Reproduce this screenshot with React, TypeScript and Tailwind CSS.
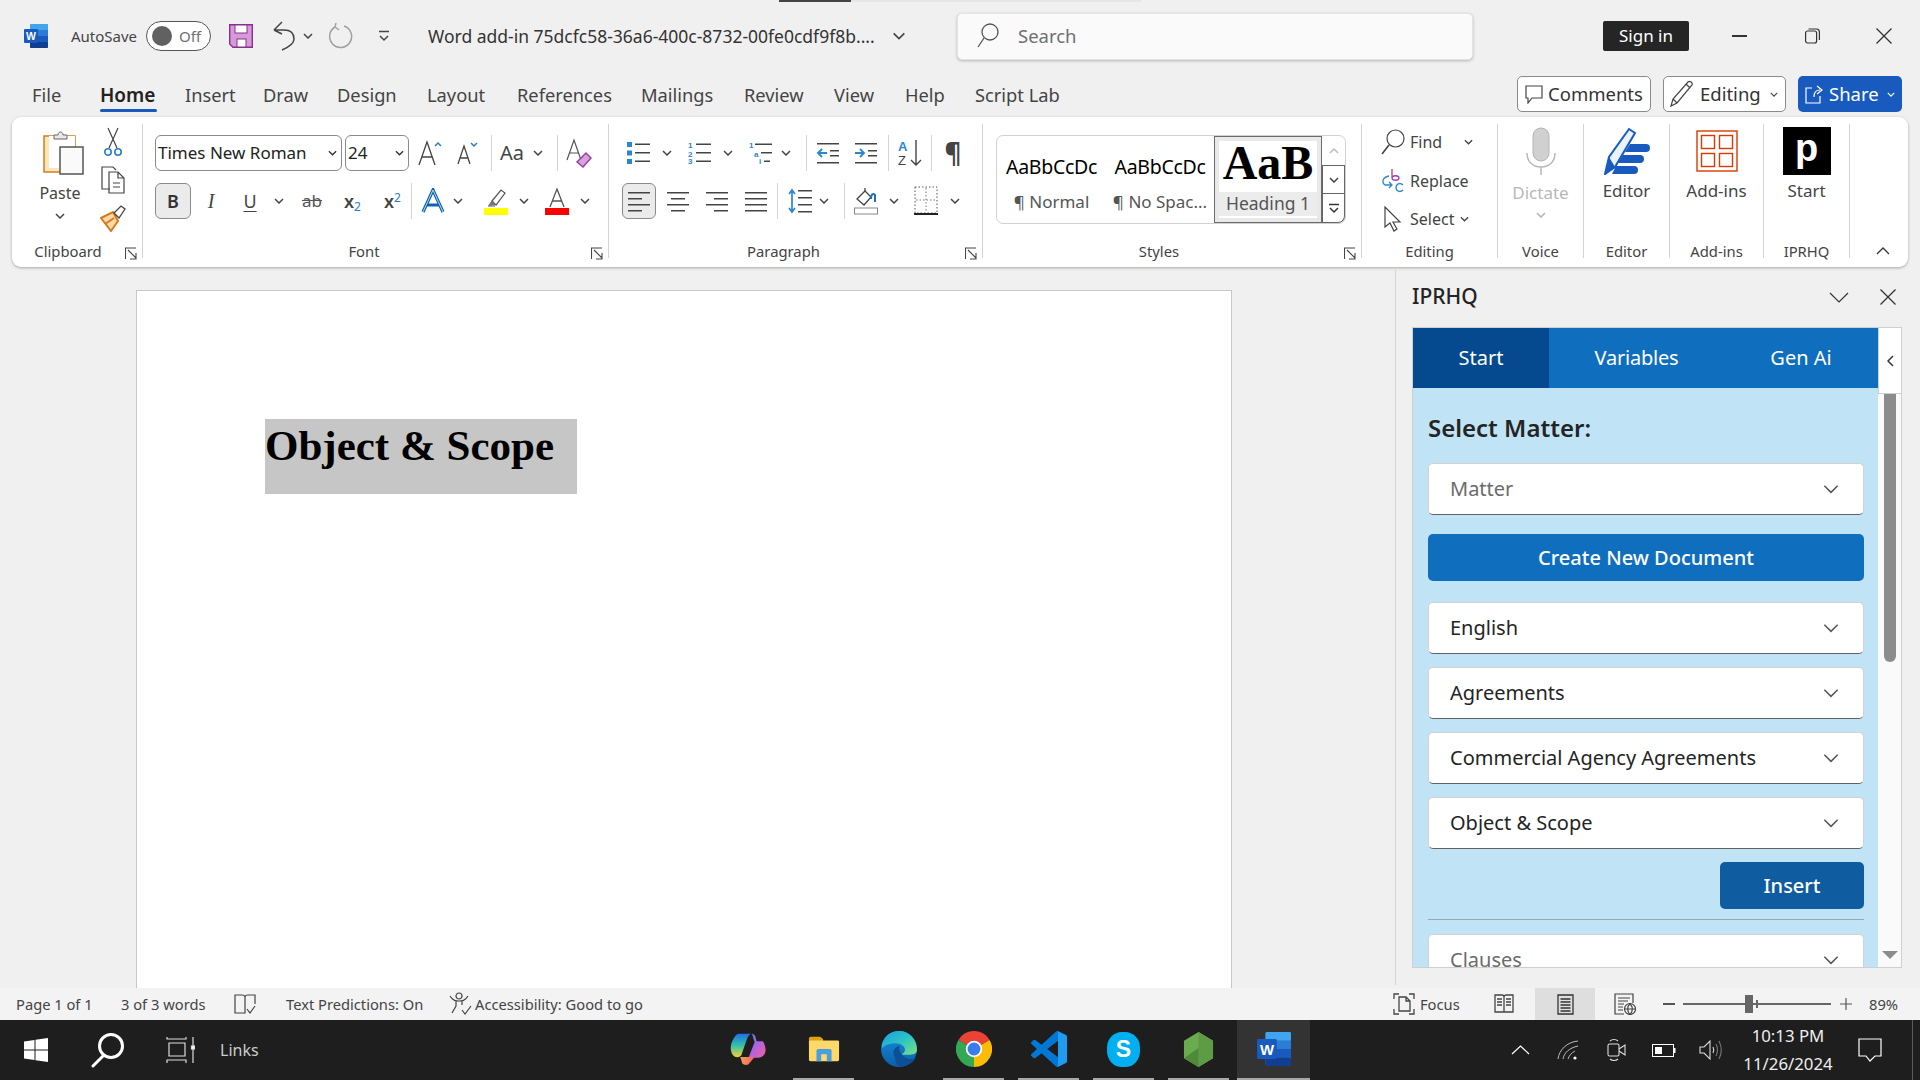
import React from "react";

const Chev = ({ c = "#444", w = 10, h = 6, sw = 1.5 }: { c?: string; w?: number; h?: number; sw?: number }) => (
  <svg width={w} height={h} viewBox="0 0 10 6" fill="none" className="shrink-0">
    <path d="M1 1 L5 5 L9 1" stroke={c} strokeWidth={sw} />
  </svg>
);

const WordIcon = ({ s = 24 }: { s?: number }) => (
  <svg width={s} height={s} viewBox="0 0 24 24">
    <rect x="6" y="0" width="18" height="24" rx="1.5" fill="#2b7cd3" />
    <rect x="6" y="0" width="18" height="6" rx="1" fill="#41a5ee" />
    <rect x="6" y="12" width="18" height="6" fill="#185abd" />
    <rect x="6" y="18" width="18" height="6" rx="1" fill="#103f91" />
    <rect x="0" y="5" width="14" height="14" rx="1" fill="#185abd" />
    <text x="7" y="16" textAnchor="middle" fontSize="10.5" fontWeight="700" fill="#fff" fontFamily="Liberation Sans">W</text>
  </svg>
);

const Sep = ({ h = 36 }: { h?: number }) => <div style={{ height: h }} className="w-[1px] bg-[#d4d4d4] shrink-0" />;

const Launcher = () => (
  <svg width="12" height="13" viewBox="0 0 12 13" fill="none" className="absolute right-[5px] bottom-[-2px]">
    <path d="M0.5 12V1H11M3 3l8 8M11 6v6H5" stroke="#444" strokeWidth="1.1" />
  </svg>
);

const Lines = ({ rows }: { rows: [number, number][] }) => (
  <svg width="24" height="24" viewBox="0 0 24 24">
    {rows.map((r, i) => (
      <rect key={i} x={r[0]} y={3 + i * 6} width={r[1]} height="1.5" fill="#444" />
    ))}
  </svg>
);

const Group = ({ w, label, pr, launcher, children }: { w: string; label?: string; pr?: string; launcher?: boolean; children: React.ReactNode }) => (
  <div className={`${w} relative h-[134px] border-r border-[#d4d4d4] flex flex-col shrink-0`}>
    <div className="flex-1 min-h-0">{children}</div>
    <div className={`${pr ?? ""} h-[20px] -mb-[3px] text-center text-[14.8px] leading-[20px] text-[#444]`}>{label}</div>
    {launcher && <Launcher />}
  </div>
);

const Dropdown = ({ text, muted }: { text: string; muted?: boolean }) => (
  <div className="h-[52px] w-[436px] shrink-0 bg-white rounded-[5px] border border-[#d1d1d1] border-b-[#616161] flex items-center pl-[21px] pr-[23px]">
    <span className={`text-[20px] ${muted ? "text-[#6b6b6b]" : "text-[#242424]"}`}>{text}</span>
    <span className="ml-auto"><Chev c="#555" w={18} h={10} sw={0.9} /></span>
  </div>
);

const Tab = ({ w, t }: { w: string; t: string }) => <div className={`${w} pt-[11px] h-[28px] leading-[28px] text-[#444] shrink-0 box-content`}>{t}</div>;

const AppSlot = ({ children, line, active }: { children: React.ReactNode; line?: string; active?: boolean }) => (
  <div className="w-[75px] h-[60px] flex flex-col items-center shrink-0">
    <div className={`${active ? "bg-[#333333]" : ""} w-[73px] flex-1 flex items-center justify-center`}>{children}</div>
    <div className={`${line ?? ""} h-[2px] bg-[#a8a8a8]`} />
  </div>
);

export default function App() {
  return (
    <div className="w-[1920px] h-[1080px] overflow-hidden flex flex-col bg-[#f0f0f0] font-['Noto_Sans',sans-serif] text-[#333]">
      {/* progress line */}
      <div className="h-[2px] flex shrink-0">
        <div className="ml-[779px] w-[72px] bg-[#444]" />
        <div className="w-[290px] bg-[#e6e6e6]" />
      </div>

      {/* title bar */}
      <div className="h-[68px] flex items-center shrink-0">
        <div className="ml-[24px] w-[24px]"><WordIcon /></div>
        <div className="ml-[23px] w-[66px] text-[15px] text-[#444] whitespace-nowrap">AutoSave</div>
        <div className="ml-[9px] w-[65px] h-[30px] rounded-full border border-[#555] bg-white flex items-center pl-[5px] shrink-0">
          <div className="w-[20px] h-[20px] rounded-full bg-[#616161]" />
          <span className="ml-[7px] text-[15px] text-[#707070]">Off</span>
        </div>
        <div className="ml-[18px] w-[24px]">
          <svg width="24" height="24" viewBox="0 0 24 24">
            <path d="M0.7 0.7H23.3V23.3H4L0.7 20Z" fill="#d79ad8" stroke="#8a2f8f" strokeWidth="1.4" />
            <rect x="6" y="1" width="12" height="8" fill="#fff" stroke="#8a2f8f" />
            <rect x="8" y="15" width="9" height="8" fill="#fff" stroke="#8a2f8f" />
          </svg>
        </div>
        <div className="ml-[20px] w-[22px]">
          <svg width="22" height="30" viewBox="0 0 22 30" fill="none" stroke="#444" strokeWidth="1.5">
            <path d="M1 9 L9 1M1 9 L9 13M1 9 H11 C18 9 21 13 21 18 C21 22 16 26 9 29" />
          </svg>
        </div>
        <div className="ml-[8px] w-[10px]"><Chev /></div>
        <div className="ml-[16px] w-[24px]">
          <svg width="24" height="26" viewBox="0 0 24 26" fill="none" stroke="#a0a0a0" strokeWidth="1.5">
            <path d="M15 3 A11 11 0 1 1 6 4M6 4 L7 0M6 4 L10 7" />
          </svg>
        </div>
        <div className="ml-[25px] w-[12px]">
          <svg width="12" height="12" viewBox="0 0 12 12" fill="none" stroke="#444" strokeWidth="1.5">
            <path d="M1 1.5H11M2 6L6 10L10 6" />
          </svg>
        </div>
        <div className="ml-[38px] w-[448px] text-[17.5px] text-[#333] whitespace-nowrap">Word add-in 75dcfc58-36a6-400c-8732-00fe0cdf9f8b....</div>
        <div className="ml-[16px] w-[14px]"><Chev w={14} h={8} c="#444" sw={1.2} /></div>
        <div className="ml-[51px] w-[516px] h-[47px] rounded-[5px] bg-[#fafafa] border border-[#e4e4e4] shadow-[0_1px_3px_rgba(0,0,0,0.25)] flex items-center pl-[19px] shrink-0">
          <svg width="22" height="28" viewBox="0 0 22 28" fill="none" stroke="#555" strokeWidth="1.3">
            <circle cx="13" cy="10" r="8" />
            <path d="M7 16 L1 25" />
          </svg>
          <span className="ml-[19px] text-[18.5px] text-[#707070]">Search</span>
        </div>
        <div className="ml-[130px] w-[86px] h-[30px] rounded-[2px] bg-[#252525] text-white text-[17px] flex items-center justify-center shrink-0">Sign in</div>
        <div className="ml-[43px] w-[15px] h-[1.5px] bg-[#333]" />
        <div className="ml-[58px] w-[15px]">
          <svg width="15" height="16" viewBox="0 0 15 16" fill="none" stroke="#333" strokeWidth="1.2">
            <rect x="0.6" y="3" width="11" height="12" rx="2" />
            <path d="M3.5 1H11.5A3 3 0 0 1 14.4 4V12" />
          </svg>
        </div>
        <div className="ml-[56px] w-[16px]">
          <svg width="16" height="16" viewBox="0 0 16 16" stroke="#333" strokeWidth="1.3"><path d="M0.5 0.5L15.5 15.5M15.5 0.5L0.5 15.5" /></svg>
        </div>
      </div>

      {/* tabs row */}
      <div className="h-[47px] flex items-start text-[18.3px] shrink-0">
        <div className="ml-[32px] flex">
          <Tab w="w-[68px]" t="File" />
          <div className="w-[85px] h-[42px] shrink-0">
            <div className="w-[57px] h-[42px] flex flex-col pt-[11px]">
              <div className="h-[28px] leading-[28px] text-[19px] font-semibold text-[#222]">Home</div>
              <div className="h-[3px] bg-[#185abd] rounded-full" />
            </div>
          </div>
          <Tab w="w-[78px]" t="Insert" />
          <Tab w="w-[74px]" t="Draw" />
          <Tab w="w-[90px]" t="Design" />
          <Tab w="w-[90px]" t="Layout" />
          <Tab w="w-[124px]" t="References" />
          <Tab w="w-[103px]" t="Mailings" />
          <Tab w="w-[90px]" t="Review" />
          <Tab w="w-[71px]" t="View" />
          <Tab w="w-[70px]" t="Help" />
          <Tab w="w-[100px]" t="Script Lab" />
        </div>
        <div className="ml-auto mr-[18px] mt-[6px] flex">
          <div className="w-[134px] h-[36px] bg-white border border-[#8a8a8a] rounded-[5px] flex items-center pl-[7px]">
            <svg width="18" height="19" viewBox="0 0 18 19" fill="none" stroke="#444" strokeWidth="1.2"><path d="M1 1H17V13H7L3 18V13H1Z" /></svg>
            <span className="ml-[5px] text-[18.5px] text-[#333]">Comments</span>
          </div>
          <div className="ml-[12px] w-[123px] h-[36px] bg-white border border-[#8a8a8a] rounded-[5px] flex items-center pl-[6px]">
            <svg width="24" height="28" viewBox="0 0 24 28" fill="none" stroke="#444" strokeWidth="1.2"><path d="M1 26L3 19L18 2C20 0 23 3 22 5L7 23ZM3 19L7 23M16 4L20 8" /></svg>
            <span className="ml-[6px] text-[18.5px] text-[#333]">Editing</span>
            <span className="ml-[9px]"><Chev w={8} h={5} /></span>
          </div>
          <div className="ml-[12px] w-[104px] h-[36px] bg-[#185abd] rounded-[5px] flex items-center pl-[7px] text-white">
            <svg width="18" height="19" viewBox="0 0 18 19" fill="none" stroke="#fff" strokeWidth="1.2"><path d="M7 3H1V18H15V11M9 12C9 7 11 5 15 5M12 1L17 5L12 9" /></svg>
            <span className="ml-[6px] text-[18.5px]">Share</span>
            <span className="ml-[8px]"><Chev w={8} h={5} c="#fff" /></span>
          </div>
        </div>
      </div>

      {/* ribbon */}
      <div className="ml-[12px] w-[1896px] h-[150px] bg-white rounded-[9px] shadow-[0_1px_3px_rgba(0,0,0,0.3)] flex pt-[7px] shrink-0 relative z-10">
        {/* Clipboard */}
        <Group w="w-[131px]" label="Clipboard" pr="pr-[18px]" launcher>
          <div className="flex">
            <div className="w-[88px] pl-[8px] flex flex-col items-center pt-[6px]">
              <svg width="41" height="45" viewBox="0 0 41 45" className="ml-[6px]">
                <rect x="1" y="6" width="31" height="36" fill="#fde9b8" stroke="#d9791c" strokeWidth="1.5" />
                <rect x="6" y="6" width="26" height="32" fill="#fff" />
                <path d="M11 9V5H15C15 1 20 1 20 5H24V9Z" fill="#e8e8e8" stroke="#666" />
                <rect x="17" y="17" width="23" height="27" fill="#fafafa" stroke="#555" strokeWidth="1.5" />
              </svg>
              <div className="mt-[7px] h-[22px] leading-[22px] text-[16px] text-[#444]">Paste</div>
              <div className="mt-[9px]"><Chev w={10} h={6} /></div>
            </div>
            <div className="w-[26px] -mt-[1px] flex flex-col">
              <div className="h-[38px] flex items-center justify-center">
                <svg width="20" height="30" viewBox="0 0 20 30" fill="none" stroke="#444" strokeWidth="1.2">
                  <path d="M5 1L14 21M15 1L6 21" />
                  <circle cx="5" cy="25" r="3.2" stroke="#2a7fc5" strokeWidth="1.6" />
                  <circle cx="15" cy="25" r="3.2" stroke="#2a7fc5" strokeWidth="1.6" />
                </svg>
              </div>
              <div className="h-[38px] flex items-center justify-center">
                <svg width="24" height="28" viewBox="0 0 24 28" fill="none" stroke="#444" strokeWidth="1.2">
                  <path d="M9 23H1V1H12L15 4" />
                  <path d="M8 6H17L23 12V27H8ZM17 6V12H23M12 17H19M12 21H19" />
                </svg>
              </div>
              <div className="h-[38px] flex items-center justify-center">
                <svg width="26" height="28" viewBox="0 0 26 28" fill="none">
                  <path d="M1 14L13 8L18 17L11 27Z" fill="#fbd9a8" stroke="#d9791c" strokeWidth="2" />
                  <path d="M5 20L14 14" stroke="#d9791c" strokeWidth="2" />
                  <path d="M14 9L21 2L25 5L19 14Z" fill="#fff" stroke="#444" strokeWidth="1.3" />
                </svg>
              </div>
            </div>
          </div>
        </Group>

        {/* Font */}
        <Group w="w-[466px]" label="Font" pr="pr-[23px]" launcher>
          <div className="pl-[12px] pt-[11px] flex items-center h-[47px]">
            <div className="w-[187px] h-[36px] rounded-[6px] border border-[#8a8a8a] flex items-center pl-[2px] pr-[4px] shrink-0">
              <span className="text-[17px] text-[#222]">Times New Roman</span>
              <span className="ml-auto"><Chev c="#333" w={9} h={6} /></span>
            </div>
            <div className="ml-[3px] w-[64px] h-[36px] rounded-[6px] border border-[#8a8a8a] flex items-center pl-[2px] pr-[4px] shrink-0">
              <span className="text-[17px] text-[#222]">24</span>
              <span className="ml-auto"><Chev c="#333" w={9} h={6} /></span>
            </div>
            <div className="ml-[6px] w-[30px] flex justify-center">
              <svg width="24" height="26" viewBox="0 0 24 26" fill="none"><path d="M1 25L9 2L17 25M4 17H14" stroke="#444" strokeWidth="1.3" /><path d="M17 6L20 3L23 6" stroke="#2a7fc5" strokeWidth="1.5" /></svg>
            </div>
            <div className="ml-[8px] w-[30px] flex justify-center">
              <svg width="22" height="24" viewBox="0 0 22 24" fill="none"><path d="M1 23L7 5L13 23M3 17H11" stroke="#444" strokeWidth="1.3" /><path d="M14 2L17 5L20 2" stroke="#2a7fc5" strokeWidth="1.5" /></svg>
            </div>
            <div className="ml-[8px] w-[1px]"><Sep /></div>
            <div className="ml-[8px] w-[25px] text-[20px] text-[#444] shrink-0 whitespace-nowrap">Aa</div>
            <div className="ml-[8px]"><Chev /></div>
            <div className="ml-[14px] w-[1px]"><Sep /></div>
            <div className="ml-[8px] w-[26px]">
              <svg width="26" height="30" viewBox="0 0 26 30" fill="none"><path d="M1 22L8 2L15 22M3.5 15H12.5" stroke="#555" strokeWidth="1.2" /><path d="M11 24L20 15L25 20L17 29Z" fill="#d7a2dc" stroke="#9b3ea3" strokeWidth="1.5" /></svg>
            </div>
          </div>
          <div className="pl-[12px] mt-[12px] flex items-center h-[36px]">
            <div className="w-[36px] h-[36px] rounded-[6px] bg-[#ebebeb] border border-[#8a8a8a] flex items-center justify-center font-semibold text-[18px] text-[#333] shrink-0">B</div>
            <div className="ml-[10px] w-[20px] text-center font-['Liberation_Serif'] italic text-[20px] text-[#444] shrink-0">I</div>
            <div className="ml-[19px] w-[20px] text-center text-[18px] text-[#444] underline underline-offset-[3px] shrink-0">U</div>
            <div className="ml-[14px]"><Chev /></div>
            <div className="ml-[16px] w-[24px] text-center text-[17px] text-[#555] line-through shrink-0">ab</div>
            <div className="ml-[16px] w-[24px] text-[18px] font-semibold text-[#444] shrink-0 pl-[4px]">x<sub className="text-[12px] text-[#2a7fc5] font-normal">2</sub></div>
            <div className="ml-[16px] w-[24px] text-[18px] font-semibold text-[#444] shrink-0 pl-[4px]">x<sup className="text-[12px] text-[#2a7fc5] font-normal">2</sup></div>
            <div className="ml-[7px] w-[1px]"><Sep /></div>
            <div className="ml-[9px] w-[24px]">
              <svg width="24" height="26" viewBox="0 0 24 26" fill="none"><path d="M2 24L12 2L22 24M6 17H18" stroke="#0f62b0" strokeWidth="3.2" /><path d="M2 24L12 2L22 24" stroke="#c5e2f7" strokeWidth="0.9" /></svg>
            </div>
            <div className="ml-[8px]"><Chev /></div>
            <div className="ml-[21px] w-[24px] flex flex-col items-center">
              <svg width="24" height="20" viewBox="0 0 24 20" fill="none"><path d="M8 13L17 2L21 5L12 17ZM8 13L5 18H11" stroke="#555" strokeWidth="1.2" fill="#fff" /><path d="M4 18L8 13L12 17Z" fill="#777" /></svg>
              <div className="w-[24px] h-[7px] bg-[#ffff00]" />
            </div>
            <div className="ml-[11px]"><Chev /></div>
            <div className="ml-[16px] w-[24px] flex flex-col items-center">
              <svg width="20" height="20" viewBox="0 0 20 20" fill="none"><path d="M3 19L10 1L17 19M5.5 13H14.5" stroke="#555" strokeWidth="1.3" /></svg>
              <div className="w-[24px] h-[7px] bg-[#ff0000]" />
            </div>
            <div className="ml-[11px]"><Chev /></div>
          </div>
        </Group>

        {/* Paragraph */}
        <Group w="w-[374px]" label="Paragraph" pr="pr-[24px]" launcher>
          <div className="pt-[11px] h-[47px] flex items-center">
            <div className="ml-[18px] w-[23px]">
              <svg width="23" height="24" viewBox="0 0 23 24"><g fill="#2a86cf"><rect x="0" y="1" width="5" height="5" /><rect x="0" y="9.5" width="5" height="5" /><rect x="0" y="18" width="5" height="5" /></g><g fill="#444"><rect x="8" y="2.5" width="15" height="1.5" /><rect x="8" y="11" width="15" height="1.5" /><rect x="8" y="19.5" width="15" height="1.5" /></g></svg>
            </div>
            <div className="ml-[12px]"><Chev /></div>
            <div className="ml-[16px] w-[23px]">
              <svg width="23" height="24" viewBox="0 0 23 24" className="overflow-visible"><g fill="#2a86cf" fontSize="8" fontWeight="700" fontFamily="Liberation Sans"><text x="0" y="7">1</text><text x="0" y="15.5">2</text><text x="0" y="23">3</text></g><g fill="#444"><rect x="8" y="2.5" width="15" height="1.5" /><rect x="8" y="11" width="15" height="1.5" /><rect x="8" y="19.5" width="15" height="1.5" /></g></svg>
            </div>
            <div className="ml-[12px]"><Chev /></div>
            <div className="ml-[16px] w-[23px]">
              <svg width="23" height="24" viewBox="0 0 23 24" className="overflow-visible"><g fill="#2a86cf" fontSize="8" fontWeight="700" fontFamily="Liberation Sans"><text x="0" y="7">1</text><text x="5" y="15.5">a</text><text x="10" y="23">i</text></g><g fill="#444"><rect x="6" y="2.5" width="17" height="1.5" /><rect x="12" y="11" width="11" height="1.5" /><rect x="15" y="19.5" width="6" height="1.5" /></g></svg>
            </div>
            <div className="ml-[9px]"><Chev /></div>
            <div className="ml-[15px] w-[1px]"><Sep /></div>
            <div className="ml-[9px] w-[24px]">
              <svg width="24" height="24" viewBox="0 0 24 24"><g fill="#444"><rect x="1" y="2" width="22" height="1.5" /><rect x="14" y="9" width="9" height="1.5" /><rect x="14" y="14" width="9" height="1.5" /><rect x="1" y="21" width="22" height="1.5" /></g><path d="M11 12H2M6 8L2 12L6 16" stroke="#2a86cf" strokeWidth="1.8" fill="none" /></svg>
            </div>
            <div className="ml-[14px] w-[24px]">
              <svg width="24" height="24" viewBox="0 0 24 24"><g fill="#444"><rect x="1" y="2" width="22" height="1.5" /><rect x="14" y="9" width="9" height="1.5" /><rect x="14" y="14" width="9" height="1.5" /><rect x="1" y="21" width="22" height="1.5" /></g><path d="M1 12H10M6 8L10 12L6 16" stroke="#2a86cf" strokeWidth="1.8" fill="none" /></svg>
            </div>
            <div className="ml-[10px] w-[1px]"><Sep /></div>
            <div className="ml-[9px] w-[24px]">
              <svg width="24" height="28" viewBox="0 0 24 28" fill="none" className="overflow-visible"><text x="0" y="12" fontSize="13" fill="#2a86cf" fontWeight="700" fontFamily="Liberation Sans">A</text><text x="0" y="26" fontSize="13" fill="#444" fontFamily="Liberation Sans">Z</text><path d="M18 1V26M13 21L18 26L23 21" stroke="#444" strokeWidth="1.4" /></svg>
            </div>
            <div className="ml-[9px] w-[1px]"><Sep /></div>
            <div className="ml-[9px] w-[24px] text-center text-[26px] leading-[30px] font-bold text-[#444]">¶</div>
          </div>
          <div className="mt-[12px] h-[36px] flex items-center">
            <div className="ml-[13px] w-[34px] h-[36px] rounded-[6px] bg-[#ebebeb] border border-[#8a8a8a] flex items-center justify-center"><Lines rows={[[1, 22], [1, 14], [1, 22], [1, 14]]} /></div>
            <div className="ml-[10px] w-[24px]"><Lines rows={[[1, 22], [5, 14], [1, 22], [5, 14]]} /></div>
            <div className="ml-[15px] w-[24px]"><Lines rows={[[1, 22], [9, 14], [1, 22], [9, 14]]} /></div>
            <div className="ml-[15px] w-[24px]"><Lines rows={[[1, 22], [1, 22], [1, 22], [1, 22]]} /></div>
            <div className="ml-[9px] w-[1px]"><Sep /></div>
            <div className="ml-[10px] w-[24px]">
              <svg width="24" height="26" viewBox="0 0 24 26" fill="none"><path d="M4 2V24M1 6L4 2L7 6M1 20L4 24L7 20" stroke="#2a86cf" strokeWidth="1.7" /><g fill="#444"><rect x="10" y="2" width="14" height="1.5" /><rect x="10" y="9" width="14" height="1.5" /><rect x="10" y="16" width="14" height="1.5" /><rect x="10" y="23" width="14" height="1.5" /></g></svg>
            </div>
            <div className="ml-[7px]"><Chev /></div>
            <div className="ml-[15px] w-[1px]"><Sep /></div>
            <div className="ml-[9px] w-[24px]">
              <svg width="24" height="28" viewBox="0 0 24 28" fill="none"><path d="M3 12L11 4L17 10L10 18Z" stroke="#444" strokeWidth="1.3" /><path d="M11 4V1" stroke="#444" strokeWidth="1.3" /><path d="M17 12C17 7 19 6 21 8V15" stroke="#1f6fc0" strokeWidth="2" /><rect x="0.5" y="21" width="23" height="6" stroke="#888" /></svg>
            </div>
            <div className="ml-[11px]"><Chev /></div>
            <div className="ml-[15px] w-[24px]">
              <svg width="24" height="30" viewBox="0 0 24 30" fill="none"><rect x="1" y="1" width="22" height="26" stroke="#555" strokeDasharray="1.5 2" /><path d="M12 2V26M2 14H22" stroke="#777" strokeDasharray="1.5 2" /><path d="M0 28H24" stroke="#222" strokeWidth="2" /></svg>
            </div>
            <div className="ml-[12px]"><Chev /></div>
          </div>
        </Group>

        {/* Styles */}
        <Group w="w-[379px]" label="Styles" pr="pr-[26px]" launcher>
          <div className="ml-[13px] mt-[11px] w-[350px] h-[89px] rounded-[7px] border border-[#d1d1d1] flex">
            <div className="w-[109px] flex flex-col items-center pt-[17px]">
              <div className="h-[28px] leading-[28px] text-[19.5px] text-black tracking-[-0.3px]">AaBbCcDc</div>
              <div className="mt-[9px] h-[24px] leading-[24px] text-[17px] text-[#555]">¶ Normal</div>
            </div>
            <div className="w-[108px] flex flex-col items-center pt-[17px]">
              <div className="h-[28px] leading-[28px] text-[19.5px] text-black tracking-[-0.3px]">AaBbCcDc</div>
              <div className="mt-[9px] h-[24px] leading-[24px] text-[17px] text-[#555] whitespace-nowrap">¶ No Spac...</div>
            </div>
            <div className="w-[108px] h-[87px] border border-[#6b6b6b]">
              <div className="h-full border-[4px] border-[#e9e9e9] flex flex-col items-center">
                <div className="h-[48px] leading-[44px] font-['Liberation_Serif'] font-bold text-[48px] text-black whitespace-nowrap">AaB</div>
                <div className="mt-[3px] h-[24px] w-full text-center bg-[#ececec] leading-[22px] text-[17.5px] text-[#555]">Heading 1</div>
              </div>
            </div>
            <div className="w-[23px] flex flex-col">
              <div className="h-[29px] flex items-center justify-center"><svg width="10" height="6" viewBox="0 0 10 6" fill="none"><path d="M1 5L5 1L9 5" stroke="#bbb" strokeWidth="1.5" /></svg></div>
              <div className="h-[29px] border border-[#666] flex items-center justify-center"><Chev /></div>
              <div className="h-[29px] border border-t-0 border-[#666] rounded-br-[7px] flex items-center justify-center">
                <svg width="12" height="11" viewBox="0 0 12 11" fill="none" stroke="#333" strokeWidth="1.5"><path d="M1 1.5H11M2 5L6 9L10 5" /></svg>
              </div>
            </div>
          </div>
        </Group>

        {/* Editing */}
        <Group w="w-[136px]" label="Editing">
          <div className="-mt-[1px] flex flex-col text-[16px] text-[#444]">
            <div className="h-[38px] flex items-center pl-[19px]">
              <svg width="24" height="26" viewBox="0 0 24 26" fill="none" stroke="#444" strokeWidth="1.2"><circle cx="14.5" cy="9.5" r="8.5" /><path d="M8 16L1 25" strokeWidth="1.6" /></svg>
              <span className="ml-[5px] w-[54px]">Find</span><Chev w={9} h={6} />
            </div>
            <div className="h-[39px] flex items-center pl-[19px]">
              <svg width="24" height="26" viewBox="0 0 24 26" fill="none"><path d="M11 1V10C11 7 18 7 18 10C18 13 11 13 11 10" stroke="#a63db0" strokeWidth="1.3" /><path d="M22 17C19 14 15 16 15 19.5C15 23 19 25 22 22" stroke="#2a86cf" strokeWidth="1.3" /><path d="M8 8C2 9 0 14 4 17H11M8 14L11 17L8 20" stroke="#2a86cf" strokeWidth="1.3" /></svg>
              <span className="ml-[5px]">Replace</span>
            </div>
            <div className="h-[38px] flex items-center pl-[19px]">
              <svg width="24" height="26" viewBox="0 0 24 26" fill="none"><path d="M4 1V21L9 17L13 25L16 23L12 16H19Z" stroke="#444" strokeWidth="1.2" /></svg>
              <span className="ml-[5px] w-[50px]">Select</span><Chev w={9} h={6} />
            </div>
          </div>
        </Group>

        {/* Voice */}
        <Group w="w-[86px]" label="Voice">
          <div className="flex flex-col items-center">
            <svg width="30" height="50" viewBox="0 0 30 50" fill="none" className="mt-[3px]">
              <rect x="7" y="1" width="16" height="33" rx="8" fill="#d0d0d0" stroke="#b5b5b5" />
              <path d="M1 26C1 34 6 40 15 40C24 40 29 34 29 26M15 40V48" stroke="#b8b8b8" strokeWidth="1.5" />
            </svg>
            <div className="mt-[5px] h-[22px] leading-[22px] text-[17px] text-[#b8b8b8]">Dictate</div>
            <div className="mt-[8px]"><Chev c="#b3b3b3" /></div>
          </div>
        </Group>

        {/* Editor */}
        <Group w="w-[86px]" label="Editor">
          <div className="flex flex-col items-center">
            <svg width="46" height="48" viewBox="0 0 46 48" fill="none" className="mt-[3px]">
              <path d="M1 47L5 30L25 2L31 6L11 40Z" fill="#eaf2fb" stroke="#185abd" strokeWidth="2" />
              <path d="M1 47L11 40L5 30Z" fill="#185abd" />
              <path d="M26 17H42A3 3 0 0 1 42 25H21ZM19 28H36A3 3 0 0 1 36 36H14ZM12 39H30A3 3 0 0 1 30 47H8Z" fill="#185abd" />
            </svg>
            <div className="mt-[5px] h-[22px] leading-[22px] text-[17px] text-[#444]">Editor</div>
          </div>
        </Group>

        {/* Add-ins */}
        <Group w="w-[94px]" label="Add-ins">
          <div className="flex flex-col items-center">
            <svg width="42" height="42" viewBox="0 0 42 42" fill="none" className="mt-[6px]">
              <rect x="1" y="1" width="40" height="40" stroke="#d83b01" strokeWidth="1.4" />
              <rect x="5.5" y="5.5" width="13" height="13" stroke="#d83b01" strokeWidth="1.4" />
              <rect x="23.5" y="5.5" width="13" height="13" stroke="#d83b01" strokeWidth="1.4" />
              <rect x="5.5" y="23.5" width="13" height="13" stroke="#d83b01" strokeWidth="1.4" />
              <rect x="23.5" y="23.5" width="13" height="13" stroke="#d83b01" strokeWidth="1.4" />
            </svg>
            <div className="mt-[8px] h-[22px] leading-[22px] text-[17px] text-[#444]">Add-ins</div>
          </div>
        </Group>

        {/* IPRHQ */}
        <Group w="w-[86px]" label="IPRHQ">
          <div className="flex flex-col items-center">
            <div className="mt-[3px] w-[48px] h-[48px] bg-black flex items-center justify-center text-white font-['Liberation_Sans'] font-bold text-[38px] leading-[38px] pb-[6px]">p</div>
            <div className="mt-[5px] h-[22px] leading-[22px] text-[17px] text-[#444]">Start</div>
          </div>
        </Group>

        <div className="flex-1 h-[134px] flex items-end justify-center pl-[8px] pb-[3px]">
          <svg width="14" height="8" viewBox="0 0 14 8" fill="none"><path d="M1 7L7 1L13 7" stroke="#333" strokeWidth="1.3" /></svg>
        </div>
      </div>

      {/* middle */}
      <div className="flex-1 min-h-0 flex">
        <div className="w-[1396px] shrink-0 border-r border-[#d4d4d4] mb-[3px] mt-[3px] pt-[20px]">
          <div className="ml-[136px] w-[1096px] h-[720px] bg-white border border-[#c8c8c8] pt-[128px] pl-[128px]">
            <div className="w-[312px] h-[75px] bg-[#c6c6c6] flex items-start">
              <span className="font-['Liberation_Serif'] font-bold text-[43px] leading-[54px] text-black whitespace-nowrap">Object &amp; Scope</span>
            </div>
          </div>
        </div>
        <div className="ml-[16px] flex-1 flex flex-col min-w-0">
          <div className="h-[60px] flex items-center shrink-0 pr-[24px]">
            <span className="text-[21px] font-medium text-[#242424]">IPRHQ</span>
            <span className="ml-auto"><svg width="20" height="11" viewBox="0 0 20 11" fill="none"><path d="M1 1L10 10L19 1" stroke="#333" strokeWidth="1.2" /></svg></span>
            <span className="ml-[31px]"><svg width="16" height="16" viewBox="0 0 16 16" stroke="#333" strokeWidth="1.3"><path d="M0.5 0.5L15.5 15.5M15.5 0.5L0.5 15.5" /></svg></span>
          </div>
          <div className="w-[490px] h-[641px] border border-[#cfcfcf] flex shrink-0">
            <div className="w-[465px] shrink-0 flex flex-col bg-[#c0e4f5] overflow-hidden">
              <div className="h-[60px] flex bg-[#106ebe] text-white text-[20px] shrink-0">
                <div className="w-[136px] bg-[#05498f] flex items-center justify-center">Start</div>
                <div className="w-[175px] flex items-center justify-center tracking-[-0.2px]">Variables</div>
                <div className="w-[154px] flex items-center justify-center">Gen Ai</div>
              </div>
              <div className="pl-[15px] flex flex-col items-start">
                <div className="mt-[25px] h-[30px] leading-[30px] text-[24px] font-semibold text-[#242424]">Select Matter:</div>
                <div className="mt-[20px]"><Dropdown text="Matter" muted /></div>
                <div className="mt-[19px] w-[436px] h-[47px] bg-[#106ebe] rounded-[5px] flex items-center justify-center text-white text-[20px] font-medium">Create New Document</div>
                <div className="mt-[21px]"><Dropdown text="English" /></div>
                <div className="mt-[13px]"><Dropdown text="Agreements" /></div>
                <div className="mt-[13px]"><Dropdown text="Commercial Agency Agreements" /></div>
                <div className="mt-[13px]"><Dropdown text="Object & Scope" /></div>
                <div className="mt-[13px] self-end mr-[14px] w-[144px] h-[47px] bg-[#0f5ca1] rounded-[5px] flex items-center justify-center text-white text-[20px] font-medium">Insert</div>
                <div className="mt-[10px] w-[436px] h-[1px] bg-[#9aa7ae]" />
                <div className="mt-[14px]"><Dropdown text="Clauses" muted /></div>
              </div>
            </div>
            <div className="flex-1 bg-[#fafafa] flex flex-col items-center">
              <div className="w-full h-[66px] bg-white border-b border-l border-[#cfcfcf] flex items-center justify-center shrink-0">
                <svg width="7" height="12" viewBox="0 0 7 12" fill="none"><path d="M6 1L1 6L6 11" stroke="#333" strokeWidth="1.5" /></svg>
              </div>
              <div className="w-[12px] h-[268px] bg-[#8c8c8c] rounded-b-full shrink-0" />
              <div className="mt-auto mb-[8px] w-0 h-0 border-l-[8px] border-r-[8px] border-t-[8px] border-l-transparent border-r-transparent border-t-[#8c8c8c]" />
            </div>
          </div>
        </div>
      </div>

      {/* status bar */}
      <div className="h-[32px] bg-[#f3f3f3] flex items-center text-[14.7px] text-[#444] whitespace-nowrap shrink-0">
        <div className="ml-[16px] w-[105px]">Page 1 of 1</div>
        <div className="w-[113px]">3 of 3 words</div>
        <div className="w-[22px]">
          <svg width="22" height="22" viewBox="0 0 22 22" fill="none" stroke="#444" strokeWidth="1.2"><path d="M11 4V20H1V2H8C10 2 11 3 11 4C11 3 12 2 14 2H21V11M13 16L16 20L21 13" /></svg>
        </div>
        <div className="ml-[30px] w-[163px]">Text Predictions: On</div>
        <div className="w-[23px]">
          <svg width="23" height="24" viewBox="0 0 23 24" fill="none" stroke="#444" strokeWidth="1.2"><circle cx="10" cy="4" r="3" /><path d="M1 4C4 9 7 9 10 9C13 9 16 9 19 4M7 9V14L3 21M13 9V13M13 18L16 22L22 14" /></svg>
        </div>
        <div className="ml-[3px]">Accessibility: Good to go</div>
        <div className="ml-auto mr-[20px] flex items-center h-[32px]">
          <svg width="22" height="22" viewBox="0 0 22 22" fill="none" stroke="#444" strokeWidth="1.3"><path d="M1 6V1H6M16 1H21V6M21 16V21H16M6 21H1V16" /><path d="M6 4H13L17 8V18H6ZM13 4V8H17" /></svg>
          <div className="ml-[5px] w-[38px]">Focus</div>
          <div className="ml-[36px] w-[20px]">
            <svg width="20" height="20" viewBox="0 0 20 20" fill="none" stroke="#444" strokeWidth="1.3"><path d="M10 3V18H1V1H8C9 1 10 2 10 3C10 2 11 1 12 1H19V18H10M3 5H8M3 8H8M3 11H8M12 5H17M12 8H17M12 11H17" /></svg>
          </div>
          <div className="ml-[21px] w-[60px] h-[32px] bg-[#dedede] flex items-center justify-center">
            <svg width="17" height="21" viewBox="0 0 17 21" fill="none" stroke="#333" strokeWidth="1.3"><path d="M1 1H16V20H1ZM3.5 5H13.5M3.5 8H13.5M3.5 11H13.5M3.5 14H13.5M3.5 17H13.5" /></svg>
          </div>
          <div className="ml-[19px] w-[22px]">
            <svg width="22" height="22" viewBox="0 0 22 22" fill="none" stroke="#444" strokeWidth="1.2"><path d="M10 21H1V1H19V10M4 5H16M4 8H14M4 11H10M4 14H9M4 17H9" /><circle cx="16" cy="16" r="5.5" /><path d="M10.5 16H21.5M16 10.5C13 14 13 18 16 21.5C19 18 19 14 16 10.5" /></svg>
          </div>
          <div className="ml-[27px] w-[12px] h-[1.5px] bg-[#555]" />
          <div className="ml-[8px] w-[148px] h-[2px] bg-[#666] relative">
            <div className="absolute left-[62px] -top-[8px] w-[8px] h-[18px] bg-[#666]" />
            <div className="absolute left-[73px] -top-[3px] w-[2px] h-[8px] bg-[#666]" />
          </div>
          <div className="ml-[9px]">
            <svg width="12" height="12" viewBox="0 0 12 12" stroke="#555" strokeWidth="1.2"><path d="M6 0V12M0 6H12" /></svg>
          </div>
          <div className="ml-[17px] w-[31px]">89%</div>
        </div>
      </div>

      {/* taskbar */}
      <div className="h-[60px] bg-[#1d1e1d] flex items-center shrink-0 text-white">
        <div className="ml-[24px] w-[24px]">
          <svg width="24" height="24" viewBox="0 0 24 24" fill="#fff"><path d="M0 3.5L10.5 2V11.5H0ZM11.5 1.8L24 0V11.5H11.5ZM0 12.5H10.5V22L0 20.5ZM11.5 12.5H24V24L11.5 22.2Z" /></svg>
        </div>
        <div className="ml-[42px] w-[35px]">
          <svg width="35" height="36" viewBox="0 0 35 36" fill="none" stroke="#fff" strokeWidth="3"><circle cx="21" cy="14" r="11.5" /><path d="M13 24L3 34" strokeLinecap="round" /></svg>
        </div>
        <div className="ml-[41px] w-[29px]">
          <svg width="29" height="28" viewBox="0 0 29 28" fill="none" stroke="#ddd" strokeWidth="1.2"><path d="M1 1V3H20V1M3 7H19V20H3ZM1 27V24H20V27M27 1V27" /><rect x="25.5" y="10" width="3" height="3" fill="#fff" /></svg>
        </div>
        <div className="ml-[25px] w-[40px] text-[16px] text-[#ccc]">Links</div>
        <div className="ml-[451px] flex">
          <AppSlot>
            <svg width="37" height="33" viewBox="0 0 36 40" preserveAspectRatio="none">
              <defs>
                <linearGradient id="cp1" x1="0" y1="0" x2="0" y2="1"><stop offset="0" stopColor="#1f6fe8" /><stop offset="0.5" stopColor="#33c2a5" /><stop offset="1" stopColor="#f4d23c" /></linearGradient>
                <linearGradient id="cp2" x1="0" y1="0" x2="1" y2="1"><stop offset="0" stopColor="#3f8bef" /><stop offset="0.5" stopColor="#b561e0" /><stop offset="1" stopColor="#f0629b" /></linearGradient>
                <linearGradient id="cp3" x1="0" y1="0" x2="1" y2="0"><stop offset="0" stopColor="#f5a04a" /><stop offset="1" stopColor="#ee5b6e" /></linearGradient>
              </defs>
              <path d="M9 1H22C19 1 18 3 16 9L11 27C9 30 5 30 3 27C0 23 0 14 3 8C5 4 6 1 9 1Z" fill="url(#cp1)" />
              <path d="M21 1C23 1 25 3 25 6L26 10H32C35 16 36 24 32 28C30 30 28 30 26 30L18 30L24 11C22 4 22 2 21 1Z" fill="url(#cp2)" />
              <path d="M10 29H24L18 38C17 39 13 39 12 37Z" fill="url(#cp3)" />
            </svg>
          </AppSlot>
          <AppSlot line="w-[61px]">
            <svg width="32" height="26" viewBox="0 0 34 34" preserveAspectRatio="none">
              <path d="M1 3C1 2 2 1 3 1H13L16 4V10H1Z" fill="#e0a10f" />
              <rect x="1" y="6" width="32" height="27" rx="1.5" fill="#ffd86a" />
              <path d="M9 33V19C9 18 10 17 11 17H23C24 17 25 18 25 19V33H20V24H14V33Z" fill="#4a9fe0" />
            </svg>
          </AppSlot>
          <AppSlot>
            <svg width="36" height="36" viewBox="0 0 36 44" preserveAspectRatio="none">
              <defs>
                <linearGradient id="eg1" x1="0" y1="0" x2="1" y2="1"><stop offset="0" stopColor="#1b9de2" /><stop offset="0.5" stopColor="#2bc4c4" /><stop offset="1" stopColor="#7de07f" /></linearGradient>
                <linearGradient id="eg2" x1="0" y1="0" x2="0" y2="1"><stop offset="0" stopColor="#1a8fe0" /><stop offset="1" stopColor="#0b5ea8" /></linearGradient>
              </defs>
              <ellipse cx="18" cy="22" rx="18" ry="22" fill="url(#eg2)" />
              <path d="M1 17C3 6 10 0 18 0C28 0 36 10 36 23C36 27 33 29 29 29H19C22 28 24 26 24 23C24 19 20 15 15 15C9 15 4 17 1 21Z" fill="url(#eg1)" />
              <path d="M14 32C10 25 14 19 19 18C17 22 19 27 24 32C27 35 31 35 35 32C32 40 24 44 18 43C15 40 14 36 14 32Z" fill="#0d4f94" />
            </svg>
          </AppSlot>
          <AppSlot line="w-[61px]">
            <svg width="36" height="36" viewBox="0 0 24 24">
              <path d="M12 12L1.6 6A12 12 0 0 1 22.4 6Z" fill="#ea4335" />
              <path d="M12 12L22.4 6A12 12 0 0 1 12 24Z" fill="#fbbc04" />
              <path d="M12 12L12 24A12 12 0 0 1 1.6 6Z" fill="#34a853" />
              <circle cx="12" cy="12" r="5.5" fill="#fff" />
              <circle cx="12" cy="12" r="4.3" fill="#3b7ded" />
            </svg>
          </AppSlot>
          <AppSlot line="w-[61px]">
            <svg width="36" height="36" viewBox="0 0 24 24">
              <path fill="#0078d4" d="M23.15 2.587L18.21.21a1.494 1.494 0 0 0-1.705.29l-9.46 8.63-4.12-3.128a.999.999 0 0 0-1.276.057L.327 7.261A1 1 0 0 0 .326 8.74L3.899 12 .326 15.26a1 1 0 0 0 .001 1.479L1.65 17.94a.999.999 0 0 0 1.276.057l4.12-3.128 9.46 8.63a1.492 1.492 0 0 0 1.704.29l4.942-2.377A1.5 1.5 0 0 0 24 20.06V3.939a1.5 1.5 0 0 0-.85-1.352zm-5.146 14.861L10.826 12l7.178-5.448v10.896z" />
              <path fill="#1f9cf0" d="M18 .1l5.15 2.49A1.5 1.5 0 0 1 24 3.94v16.12a1.5 1.5 0 0 1-.85 1.35L18 23.9z" />
            </svg>
          </AppSlot>
          <AppSlot line="w-[61px]">
            <div className="w-[33px] h-[35px] rounded-[45%] bg-[#00aff0] flex items-center justify-center text-white font-bold text-[23px] font-['Liberation_Sans']">S</div>
          </AppSlot>
          <AppSlot line="w-[61px]">
            <svg width="31" height="35" viewBox="0 0 32 44" preserveAspectRatio="none">
              <path d="M16 0L31 11V33L16 44L1 33V11Z" fill="#6aab4f" />
              <path d="M16 0L31 11V33L16 44Z" fill="#5d9c45" />
              <path d="M1 33L16 20L16 44Z" fill="#4f8a3a" />
            </svg>
          </AppSlot>
          <AppSlot line="w-[73px]" active>
            <WordIcon s={34} />
          </AppSlot>
        </div>
        <div className="ml-[197px] w-[24px] flex justify-center">
          <svg width="19" height="10" viewBox="0 0 19 10" fill="none" stroke="#fff" strokeWidth="1.2"><path d="M1 9L9.5 1L18 9" /></svg>
        </div>
        <div className="ml-[25px] w-[24px]">
          <svg width="22" height="20" viewBox="0 0 22 20" fill="none" stroke="#bbb" strokeWidth="1"><path d="M1 19C2 10 10 2 21 1M6 19C7 13 12 8 21 6M11 19C12 16 14 13 18 11" /><circle cx="18" cy="18" r="1.6" fill="#fff" stroke="none" /></svg>
        </div>
        <div className="ml-[24px] w-[24px]">
          <svg width="24" height="24" viewBox="0 0 24 24" fill="none" stroke="#ddd" strokeWidth="1.1"><rect x="3" y="6" width="11" height="12" rx="1.5" /><path d="M14 11L20 7V17L14 13M5 3C7 1 11 1 13 3M5 21C7 23 11 23 13 21" /></svg>
        </div>
        <div className="ml-[23px] w-[24px]">
          <svg width="24" height="13" viewBox="0 0 24 13" fill="none"><rect x="0.5" y="0.5" width="21" height="12" stroke="#fff" /><rect x="3" y="3" width="7" height="7" fill="#fff" /><rect x="22" y="4" width="1.5" height="5" fill="#fff" /></svg>
        </div>
        <div className="ml-[23px] w-[24px]">
          <svg width="24" height="22" viewBox="0 0 24 22" fill="none" stroke="#ddd" strokeWidth="1.1"><path d="M1 8H5L11 2V20L5 14H1ZM14 8C15 10 15 12 14 14" /><path d="M17 5C19 9 19 13 17 17M20 2C23 8 23 14 20 20" stroke="#777" /></svg>
        </div>
        <div className="ml-[7px] w-[116px] flex flex-col items-center text-[16.8px] leading-[28px] text-[#eee]">
          <div>10:13 PM</div>
          <div>11/26/2024</div>
        </div>
        <div className="ml-[12px] w-[24px]">
          <svg width="24" height="24" viewBox="0 0 24 24" fill="none" stroke="#fff" strokeWidth="1.2"><path d="M1 1H23V18H17L12 23L8 18H1Z" /></svg>
        </div>
        <div className="ml-[30px] w-[1px] h-[60px] bg-[#5a5a5a]" />
      </div>
    </div>
  );
}
